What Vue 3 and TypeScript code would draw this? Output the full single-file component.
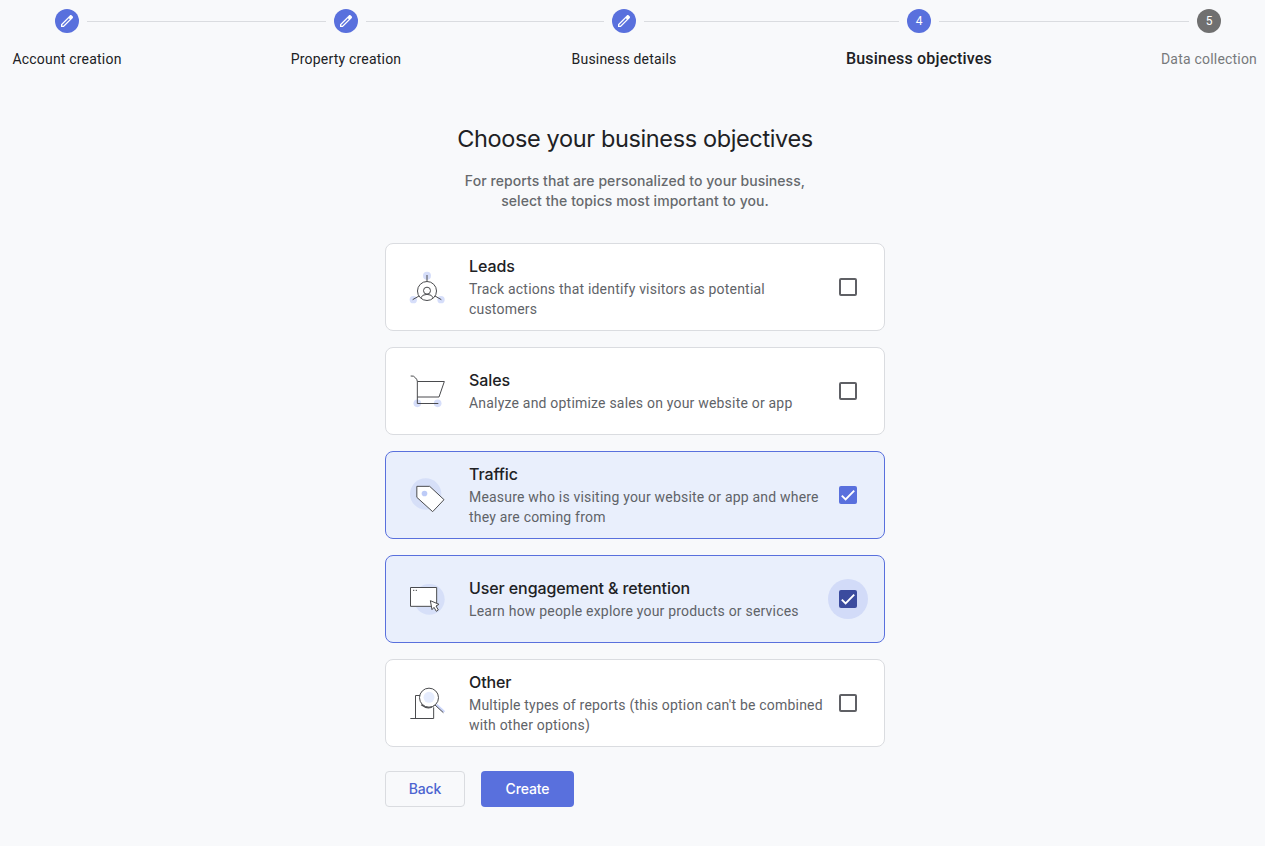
<script setup lang="ts">
import { ref } from 'vue'

interface Step {
  label: string
  state: 'done' | 'active' | 'pending'
  size: string
}

interface Objective {
  id: string
  title: string
  text: string
}

const steps: Step[] = [
  { label: 'Account creation', state: 'done', size: 'w-account' },
  { label: 'Property creation', state: 'done', size: 'w-property' },
  { label: 'Business details', state: 'done', size: 'w-details' },
  { label: 'Business objectives', state: 'active', size: 'w-objectives' },
  { label: 'Data collection', state: 'pending', size: 'w-data' },
]

const objectives: Objective[] = [
  { id: 'leads', title: 'Leads', text: 'Track actions that identify visitors as potential\ncustomers' },
  { id: 'sales', title: 'Sales', text: 'Analyze and optimize sales on your website or app' },
  { id: 'traffic', title: 'Traffic', text: 'Measure who is visiting your website or app and where\nthey are coming from' },
  { id: 'engagement', title: 'User engagement & retention', text: 'Learn how people explore your products or services' },
  { id: 'other', title: 'Other', text: "Multiple types of reports (this option can't be combined\nwith other options)" },
]

const selected = ref<string[]>(['traffic', 'engagement'])
const focused = ref('engagement')

function toggle(id: string): void {
  focused.value = id
  selected.value = selected.value.includes(id)
    ? selected.value.filter((item) => item !== id)
    : [...selected.value, id]
}
</script>

<template>
  <div class="page">
    <nav class="stepper">
      <template v-for="(step, i) in steps" :key="step.label">
        <div class="step" :class="[step.state, step.size]">
          <div class="marker-row">
            <span class="rail" :class="{ hidden: i === 0 }"></span>
            <span class="marker">
              <svg v-if="step.state === 'done'" class="pencil" viewBox="0 0 24 24">
                <path d="M3 21v-4.25L16.2 3.575q.3-.275.663-.425.362-.15.762-.15t.775.15q.375.15.65.45L20.425 5q.3.275.438.65.137.375.137.75 0 .4-.137.763-.138.362-.438.662L7.25 21ZM5 19h1.4l9.825-9.8-1.425-1.425L5 17.6Z" />
              </svg>
              <template v-else>{{ i + 1 }}</template>
            </span>
            <span class="rail" :class="{ hidden: i === steps.length - 1 }"></span>
          </div>
          <div class="step-label">{{ step.label }}</div>
        </div>
        <div v-if="i < steps.length - 1" class="connector"></div>
      </template>
    </nav>

    <main class="content">
      <h1>Choose your business objectives</h1>
      <p class="intro">For reports that are personalized to your business,<br />select the topics most important to you.</p>

      <div class="cards">
        <div
          v-for="item in objectives"
          :key="item.id"
          class="card"
          :class="[item.id, { selected: selected.includes(item.id) }]"
          @click="toggle(item.id)"
        >
          <svg v-if="item.id === 'leads'" class="art" viewBox="87 87 108 108">
            <g class="tint">
              <circle cx="141" cy="107" r="12" />
              <circle cx="100" cy="179" r="11" />
              <circle cx="183" cy="179" r="11" />
            </g>
            <g class="ink">
              <path d="M141 105V124M117 168L98 179M165 168L184 179" />
              <circle cx="141" cy="153" r="28.5" />
              <circle cx="141" cy="152" r="10.5" />
              <path d="M122 174Q126 163 141 163T160 174" />
            </g>
          </svg>
          <svg v-else-if="item.id === 'sales'" class="art" viewBox="87 84 108 108">
            <g class="tint">
              <circle cx="112" cy="175" r="11.5" />
              <circle cx="173" cy="175" r="11.5" />
            </g>
            <path class="ink" d="M92 93Q101 91 107 99Q112 104 112 110V175.500H175M112 109.500H193L177 156H112" />
          </svg>
          <svg v-else-if="item.id === 'traffic'" class="art" viewBox="87 87 108 108">
            <circle class="disc" cx="137" cy="138" r="47" />
            <path class="ink paper" d="M110.500 115H149L192 155L158 191L110.500 148Z" />
            <circle class="hole" cx="133.500" cy="136.500" r="8.500" />
          </svg>
          <svg v-else-if="item.id === 'engagement'" class="art" viewBox="87 87 108 108">
            <circle class="disc" cx="148" cy="142" r="46" />
            <path class="ink paper" d="M91.500 106.500H170V163H91.500Z" />
            <path class="dots" d="M99 115H103M107 115H111" />
            <path class="ink paper" d="M151 146L177 157L168 162L175 174L169 178L162 166L156 173Z" />
          </svg>
          <svg v-else class="art" viewBox="87 87 108 108">
            <path class="ink" d="M91 187.500H161V154M106.500 187V118.500H122" />
            <path class="handle" d="M169 146L193 168" />
            <path class="ink" d="M165 147L190 170" />
            <path class="shade" d="M124 146Q146 163 163 147" />
            <circle class="ink paper" cx="147" cy="125" r="28.500" />
            <circle class="lens" cx="147" cy="124" r="16.500" />
          </svg>

          <div class="copy">
            <h2>{{ item.title }}</h2>
            <p>{{ item.text }}</p>
          </div>

          <div
            class="check"
            :class="{ on: selected.includes(item.id), focused: focused === item.id }"
            role="checkbox"
            :aria-checked="selected.includes(item.id)"
          >
            <span class="box">
              <svg v-if="selected.includes(item.id)" viewBox="0 0 18 18">
                <path d="M2.800 9.600L6.600 13.400L15.200 4.600" />
              </svg>
            </span>
          </div>
        </div>
      </div>

      <div class="actions">
        <button class="back" type="button">Back</button>
        <button class="create" type="button">Create</button>
      </div>
    </main>
  </div>
</template>

<style>
body {
  background: #f8f9fb;
}
</style>

<style scoped>
.page {
  box-sizing: border-box;
  height: 846px;
  padding-top: 9px;
  overflow: hidden;
  background: #f8f9fb;
  color: #202124;
  font-family: Roboto, "Liberation Sans", sans-serif;
  font-size: 14px;
}

.stepper {
  display: flex;
  padding: 0 8px 0 12px;
}

.step {
  flex: none;
}

.w-account { width: 110px; }
.w-property { width: 110px; }
.w-details { width: 106px; }
.w-objectives { width: 147px; }
.w-data { width: 96px; }

.connector {
  flex: 168.5 0 0;
  height: 1px;
  margin-top: 12px;
  background: #dadce0;
}

.w-account + .connector { flex-grow: 169; }
.w-property + .connector { flex-grow: 170; }

.marker-row {
  display: flex;
  align-items: flex-start;
  gap: 8px;
}

.rail {
  flex: 1;
  height: 1px;
  margin-top: 12px;
  background: #dadce0;
}

.rail.hidden {
  background: transparent;
}

.marker {
  display: flex;
  align-items: center;
  justify-content: center;
  width: 24px;
  height: 24px;
  border-radius: 50%;
  background: #5970dd;
  color: #fff;
  font-size: 12px;
}

.pencil {
  width: 16px;
  height: 16px;
  fill: #fff;
}

.pending .marker {
  background: #707070;
}

.step-label {
  display: flex;
  justify-content: center;
  margin-top: 16px;
  line-height: 20px;
  letter-spacing: 0.2px;
  white-space: nowrap;
}

.active .step-label {
  font-size: 16px;
  font-weight: 500;
  letter-spacing: 0.2px;
}

.pending .step-label {
  color: #77797b;
}

.content {
  width: 500px;
  margin: 54px 0 0 385px;
}

h1 {
  margin: 0;
  font: 400 23.5px/32px Inter, sans-serif;
  letter-spacing: -0.37px;
  text-align: center;
  white-space: nowrap;
}

.intro {
  margin: 16px 0 0;
  color: #66696d;
  font: 450 14px/20px Inter, sans-serif;
  letter-spacing: 0.07px;
  text-align: center;
}

.cards {
  display: flex;
  flex-direction: column;
  gap: 16px;
  margin-top: 32px;
}

.card {
  box-sizing: border-box;
  display: flex;
  align-items: center;
  height: 88px;
  padding: 0 16px 0 23px;
  border: 1px solid #dadce0;
  border-radius: 8px;
  background: #fff;
  cursor: pointer;
}

.card.selected {
  border-color: #5970dd;
  background: #e9effc;
}

.art {
  flex: none;
  width: 36px;
  height: 36px;
  overflow: visible;
}

.ink {
  fill: none;
  stroke: #4a4b4e;
  stroke-width: 3;
}

.paper { fill: #fff; }
.tint { fill: #d6defa; }
.disc { fill: #d6dff8; }
.hole { fill: #bdcbf7; }
.lens { fill: #e5ecfd; }
.dots { stroke: #4a4b4e; stroke-width: 3; }
.handle { stroke: #cbd5f8; stroke-width: 7; }
.shade { fill: none; stroke: #4a4b4e; stroke-width: 5; }

.copy {
  flex: 1;
  min-width: 0;
  margin-left: 24px;
  white-space: pre;
}

h2 {
  margin: 0;
  padding-bottom: 2px;
  font: 500 16px/22px Inter, sans-serif;
  letter-spacing: -0.1px;
}

.copy p {
  margin: 0;
  color: #5f6368;
  line-height: 20px;
  letter-spacing: 0.2px;
}

.check {
  display: flex;
  flex: none;
  align-items: center;
  justify-content: center;
  width: 40px;
  height: 40px;
  border-radius: 50%;
}

.check.focused.on {
  background: #d2dbf8;
}

.box {
  box-sizing: border-box;
  display: block;
  width: 18px;
  height: 18px;
  border: 2px solid #5f6065;
  border-radius: 2px;
}

.on .box {
  border: 0;
  background: #5970dd;
}

.focused.on .box {
  background: #3b4b9e;
}

.box svg {
  display: block;
  fill: none;
  stroke: #fff;
  stroke-width: 1.9;
}

.actions {
  display: flex;
  gap: 16px;
  margin-top: 24px;
}

button {
  box-sizing: border-box;
  height: 36px;
  padding: 0;
  border: 0;
  border-radius: 4px;
  font: 500 14px/20px Inter, sans-serif;
  letter-spacing: -0.1px;
}

.back {
  width: 80px;
  border: 1px solid #dadce0;
  background: transparent;
  color: #4c64d0;
}

.create {
  width: 93px;
  background: #5970dd;
  color: #fff;
}
</style>
